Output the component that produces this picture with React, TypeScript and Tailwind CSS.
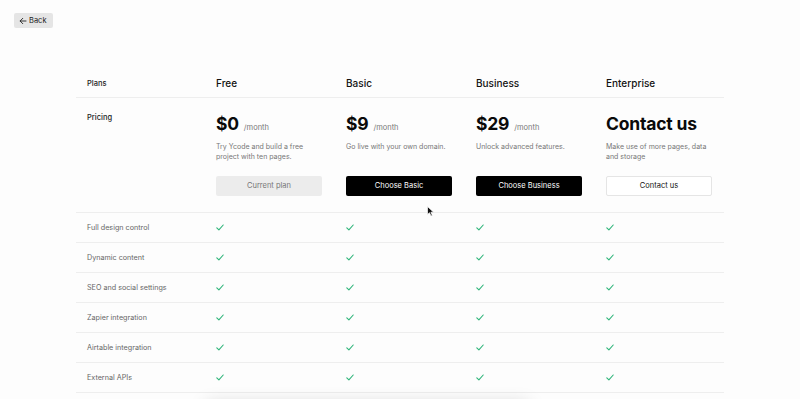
import React from "react";

const plans = [
  { name: "Free", price: "$0", desc: "Try Ycode and build a free project with ten pages.", btn: "Current plan", kind: "current" },
  { name: "Basic", price: "$9", desc: "Go live with your own domain.", btn: "Choose Basic", kind: "dark" },
  { name: "Business", price: "$29", desc: "Unlock advanced features.", btn: "Choose Business", kind: "dark" },
  { name: "Enterprise", price: "Contact us", desc: "Make use of more pages, data and storage", btn: "Contact us", kind: "outline" },
];

const features = [
  "Full design control",
  "Dynamic content",
  "SEO and social settings",
  "Zapier integration",
  "Airtable integration",
  "External APIs",
];

function Check() {
  return (
    <svg width="8" height="7" viewBox="0 0 8 7" fill="none">
      <path d="M0.8 3.8 L2.9 5.8 L7.2 1" stroke="#2fb57a" strokeWidth="1.1" strokeLinecap="round" strokeLinejoin="round" />
    </svg>
  );
}

export default function App() {
  return (
    <div
      className="relative w-[800px] h-[399px] overflow-hidden bg-[#fdfdfd] text-[#111]"
      style={{ fontFamily: "Inter, 'Noto Sans', sans-serif" }}
    >
      <div className="pt-[13px] pl-[14px]">
        <button className="flex items-center gap-[2px] h-[15px] pl-[5px] pr-[6px] pt-[1px] bg-[#e5e5e5] rounded-[2px] text-[7.5px] text-[#222]">
          <svg width="8" height="8" viewBox="0 0 8 8" fill="none">
            <path d="M7 4H1.2M3.8 1.3L1.1 4l2.7 2.7" stroke="#222" strokeWidth="0.9" strokeLinecap="round" strokeLinejoin="round" />
          </svg>
          <span>Back</span>
        </button>
      </div>

      <div className="mt-[42px] ml-[76px] w-[648px]">
        <div className="grid grid-cols-[130px_130px_130px_130px_128px] h-[28px] border-b border-[#eeeeee] items-center">
          <div className="pl-[11px] text-[7.5px] font-medium text-[#222]">Plans</div>
          {plans.map((p) => (
            <div key={p.name} className="pl-[10px] text-[10px] font-medium text-[#111]">
              {p.name}
            </div>
          ))}
        </div>

        <div className="grid grid-cols-[130px_130px_130px_130px_128px] pt-[14px] pb-[16px] border-b border-[#eeeeee]">
          <div className="pl-[11px] pt-[1px] text-[7.5px] font-medium text-[#222] leading-[10px]">Pricing</div>
          {plans.map((p) => (
            <div key={p.name} className="pl-[10px] flex flex-col">
              <div className="flex items-baseline h-[24px]">
                <span className="text-[17.5px] font-bold tracking-[-0.2px] text-[#0a0a0a] leading-[24px]">{p.price}</span>
                {p.kind !== "outline" && (
                  <span className="ml-[5px] text-[7.5px] text-[#777]">/month</span>
                )}
              </div>
              <div className="mt-[6px] h-[20px] text-[7px] leading-[10px] text-[#777] w-[106px]">{p.desc}</div>
              <div className="mt-[14px] flex">
                {p.kind === "current" && (
                  <button className="block w-[106px] h-[20px] rounded-[2px] bg-[#ececec] text-[7.5px] text-[#777]">{p.btn}</button>
                )}
                {p.kind === "dark" && (
                  <button className="block w-[106px] h-[20px] rounded-[2px] bg-black text-[7.5px] text-white">{p.btn}</button>
                )}
                {p.kind === "outline" && (
                  <button className="block w-[106px] h-[20px] rounded-[2px] bg-white border border-[#e5e5e5] text-[7.5px] text-[#111]">{p.btn}</button>
                )}
              </div>
            </div>
          ))}
        </div>

        {features.map((f) => (
          <div key={f} className="grid grid-cols-[130px_130px_130px_130px_128px] h-[30px] items-center border-b border-[#eeeeee]">
            <div className="pl-[11px] pt-[1px] text-[7.2px] text-[#666]">{f}</div>
            {plans.map((p) => (
              <div key={p.name} className="pl-[10px] flex items-center">
                <Check />
              </div>
            ))}
          </div>
        ))}
      </div>

      <div className="absolute left-[205px] top-[404px] w-[325px] h-[40px] rounded-[6px] bg-white shadow-[0_0_18px_rgba(0,0,0,0.18)]" />

      <svg className="absolute left-[427px] top-[206px]" width="8" height="11" viewBox="0 0 8 11">
        <path d="M0.5 0.5 L0.5 8.5 L2.5 6.7 L4 10 L5.3 9.4 L3.9 6.2 L6.6 6.2 Z" fill="#111" stroke="#fff" strokeWidth="0.7" />
      </svg>
    </div>
  );
}
